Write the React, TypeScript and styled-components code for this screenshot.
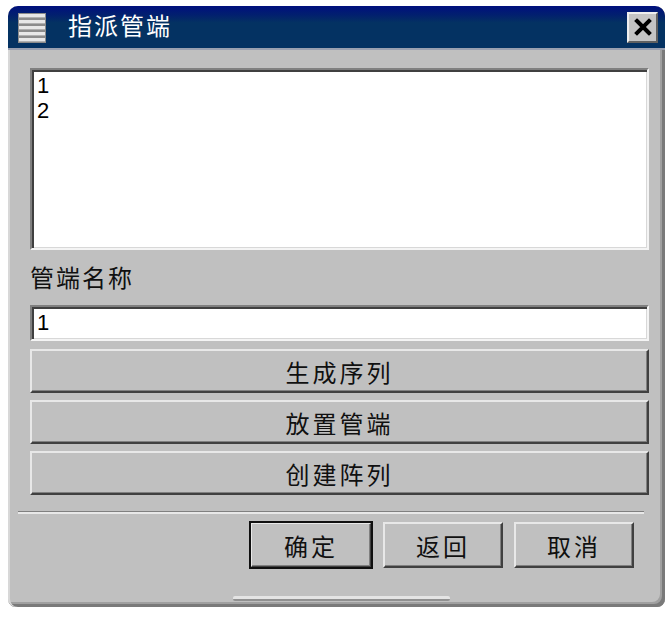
import React from 'react';
import styled, { createGlobalStyle } from 'styled-components';

const GlobalStyle = createGlobalStyle`
  html, body {
    margin: 0;
    padding: 0;
    background: #ffffff;
  }
  body {
    font-family: "Noto Sans CJK SC", "Liberation Sans", sans-serif;
  }
`;

const Window = styled.div`
  margin: 6px 0 0 8px;
  width: 657px;
  height: 601px;
  box-sizing: border-box;
  display: flex;
  flex-direction: column;
  background: #c0c0c0;
  border-radius: 10px 10px 8px 8px;
  overflow: hidden;
  box-shadow: inset 2px 0 0 #d8d8d8, inset -3px -3px 0 #7a7a7a, inset -5px -5px 0 #a0a0a0;
`;

const TitleBar = styled.div`
  height: 42px;
  flex-shrink: 0;
  display: flex;
  align-items: center;
  padding: 0 7px 0 10px;
  background: linear-gradient(to bottom, #00107e 0%, #02206e 22%, #043262 40%, #043262 100%);
  border-bottom: 2px solid #9aa0b0;
`;

const MenuIcon = styled.div`
  width: 28px;
  height: 30px;
  display: flex;
  margin-top: 2px;
`;

const TitleText = styled.div`
  margin-left: 22px;
  color: #ffffff;
  font-size: 24px;
  letter-spacing: 2px;
  line-height: 1;
  flex: 1;
  margin-top: -4px;
`;

const CloseButton = styled.div`
  width: 31px;
  height: 31px;
  box-sizing: border-box;
  display: flex;
  align-items: center;
  justify-content: center;
  background: #c4c4c4;
  border-top: 2px solid #eeeeee;
  border-left: 2px solid #eeeeee;
  border-right: 2px solid #606060;
  border-bottom: 2px solid #606060;
`;

const Content = styled.div`
  flex: 1;
  display: flex;
  flex-direction: column;
  padding: 18px 16px 0 22px;
`;

const sunken = `
  box-sizing: border-box;
  background: #ffffff;
  border-top: 2px solid #808080;
  border-left: 2px solid #808080;
  border-right: 2px solid #f4f4f4;
  border-bottom: 2px solid #f4f4f4;
  box-shadow: inset 2px 2px 0 #404040, inset -1px -1px 0 #d8d8d8;
`;

const ListBox = styled.div`
  ${sunken}
  height: 182px;
  padding: 3px 0 0 5px;
  font-family: "Liberation Sans", "Noto Sans CJK SC", sans-serif;
  font-size: 22px;
  line-height: 25px;
  color: #000000;
`;

const ListItem = styled.div`
  height: 25px;
`;

const FieldLabel = styled.div`
  margin-top: 11px;
  height: 32px;
  font-size: 24px;
  line-height: 32px;
  letter-spacing: 2px;
  color: #101010;
`;

const TextInput = styled.div`
  ${sunken}
  margin-top: 12px;
  height: 36px;
  padding: 2px 0 0 5px;
  font-family: "Liberation Sans", "Noto Sans CJK SC", sans-serif;
  font-size: 22px;
  line-height: 28px;
`;

const raised = `
  box-sizing: border-box;
  background: #c0c0c0;
  border-top: 2px solid #e8e8e8;
  border-left: 2px solid #e8e8e8;
  border-right: 2px solid #404040;
  border-bottom: 2px solid #404040;
  box-shadow: inset -1px -1px 0 #808080;
  display: flex;
  align-items: center;
  justify-content: center;
  font-size: 24px;
  letter-spacing: 3px;
  color: #101010;
`;

const WideButton = styled.div`
  ${raised}
  height: 44px;
  margin-top: 7px;
  &:first-of-type {
    margin-top: 8px;
  }
`;

const ButtonStack = styled.div`
  display: flex;
  flex-direction: column;
`;

const Separator = styled.div`
  margin: 16px 5px 0 -12px;
  height: 1px;
  background: #808080;
  border-bottom: 2px solid #e8e8e8;
`;

const Footer = styled.div`
  display: flex;
  justify-content: flex-end;
  gap: 11px;
  margin-top: 8px;
  padding-right: 15px;
`;

const DialogButton = styled.div<{ $width: number; $default?: boolean }>`
  ${raised}
  width: ${(p) => p.$width}px;
  height: 46px;
  ${(p) => (p.$default ? 'outline: 2px solid #101010; outline-offset: -1px;' : '')}
`;

const Grip = styled.div`
  align-self: center;
  margin-top: 28px;
  margin-left: 4px;
  width: 217px;
  height: 3px;
  background: #e4e4e4;
  border-bottom: 2px solid #909090;
  border-radius: 2px;
`;

const MenuGlyph = () => (
  <svg width="28" height="30" viewBox="0 0 28 30">
    <rect x="0" y="0" width="28" height="30" fill="#8c8c8c" />
    {[0, 1, 2, 3, 4].map((i) => (
      <g key={i}>
        <rect x="1" y={1 + i * 6} width="26" height="4" fill="#e8e8e8" />
        <rect x="1" y={4 + i * 6} width="26" height="1" fill="#b0b0b0" />
      </g>
    ))}
  </svg>
);

const CloseGlyph = () => (
  <svg width="18" height="18" viewBox="0 0 18 18">
    <path d="M3 3 L15 15 M15 3 L3 15" stroke="#000000" strokeWidth="4" strokeLinecap="square" />
  </svg>
);

export default function App() {
  return (
    <>
      <GlobalStyle />
      <Window>
        <TitleBar>
          <MenuIcon>
            <MenuGlyph />
          </MenuIcon>
          <TitleText>指派管端</TitleText>
          <CloseButton>
            <CloseGlyph />
          </CloseButton>
        </TitleBar>
        <Content>
          <ListBox>
            <ListItem>1</ListItem>
            <ListItem>2</ListItem>
          </ListBox>
          <FieldLabel>管端名称</FieldLabel>
          <TextInput>1</TextInput>
          <ButtonStack>
            <WideButton>生成序列</WideButton>
            <WideButton>放置管端</WideButton>
            <WideButton>创建阵列</WideButton>
          </ButtonStack>
          <Separator />
          <Footer>
            <DialogButton $width={122} $default>确定</DialogButton>
            <DialogButton $width={120}>返回</DialogButton>
            <DialogButton $width={120}>取消</DialogButton>
          </Footer>
          <Grip />
        </Content>
      </Window>
    </>
  );
}
